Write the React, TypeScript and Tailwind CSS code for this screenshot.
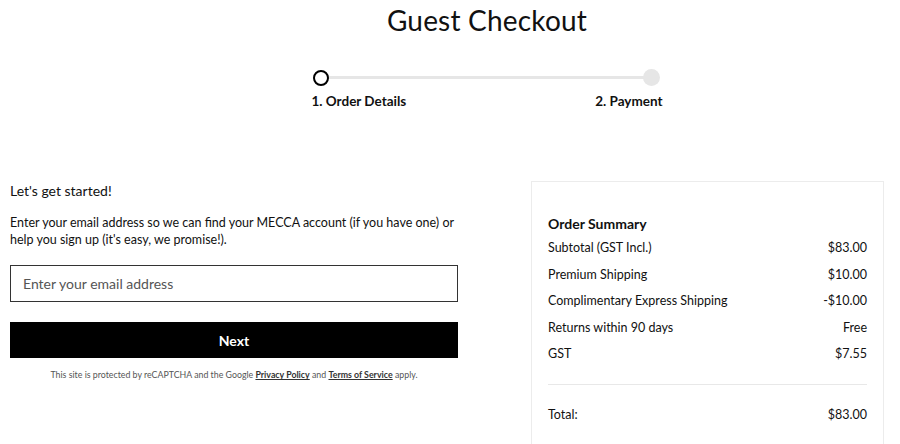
import React from 'react';

const font = { fontFamily: '"Lato", "Noto Sans", sans-serif' };

const rows = [
  { label: 'Subtotal (GST Incl.)', value: '$83.00' },
  { label: 'Premium Shipping', value: '$10.00' },
  { label: 'Complimentary Express Shipping', value: '-$10.00' },
  { label: 'Returns within 90 days', value: 'Free' },
  { label: 'GST', value: '$7.55' },
];

function Stepper() {
  return (
    <div className="w-[351px] mx-auto mt-[29px]">
      <div className="relative h-[18px] mx-[1px]">
        <div className="absolute left-[8px] right-[10px] top-[7px] h-[3px] bg-[#e6e6e6]" />
        <div className="absolute left-[0px] top-[1px] w-[16px] h-[16px] rounded-full border-2 border-black bg-white" />
        <div className="absolute right-[2px] top-[0px] w-[17px] h-[17px] rounded-full bg-[#e6e6e6]" />
      </div>
      <div className="flex justify-between mt-[4px] text-[13.5px] font-bold text-[#111]">
        <span>1. Order Details</span>
        <span>2. Payment</span>
      </div>
    </div>
  );
}

export default function App() {
  return (
    <div className="w-[900px] h-[444px] overflow-hidden bg-white text-[#111]" style={font}>
      {/* Header */}
      <div className="pl-[74px]">
        <h1 className="text-center text-[28px] leading-[40px] font-normal tracking-[0.2px]">Guest Checkout</h1>
        <Stepper />
      </div>

      <div className="flex pl-[10px] mt-[70px] gap-[73px]">
        {/* Left column */}
        <div className="w-[448px] pt-[0px]">
          <p className="text-[14px] leading-[20px]">Let's get started!</p>
          <p className="mt-[13px] text-[12.5px] leading-[17px]">
            Enter your email address so we can find your MECCA account (if you have one) or help you sign up (it's easy, we promise!).
          </p>
          <input
            placeholder="Enter your email address"
            className="mt-[17px] w-full h-[37px] border border-[#333] px-[12px] text-[14px] placeholder:text-[#555] outline-none"
          />
          <button className="mt-[20px] w-full h-[36px] bg-black text-white text-[14px] font-bold">Next</button>
          <p className="mt-[10px] text-center text-[8.8px] text-[#555]">
            This site is protected by reCAPTCHA and the Google{' '}
            <span className="underline font-bold text-[#333]">Privacy Policy</span> and{' '}
            <span className="underline font-bold text-[#333]">Terms of Service</span> apply.
          </p>
        </div>

        {/* Order summary card */}
        <div className="w-[353px] h-[300px] border border-[#ececec] px-[16px] pt-[32px]">
          <h2 className="text-[14px] leading-[20px] font-bold">Order Summary</h2>
          <div className="mt-[1px]">
            {rows.map((r) => (
              <div key={r.label} className="flex justify-between h-[26.5px] items-center text-[12.5px]">
                <span>{r.label}</span>
                <span>{r.value}</span>
              </div>
            ))}
          </div>
          <div className="mt-[16px] border-t border-[#e8e8e8]" />
          <div className="flex justify-between mt-[21px] text-[12.5px]">
            <span>Total:</span>
            <span>$83.00</span>
          </div>
        </div>
      </div>
    </div>
  );
}
